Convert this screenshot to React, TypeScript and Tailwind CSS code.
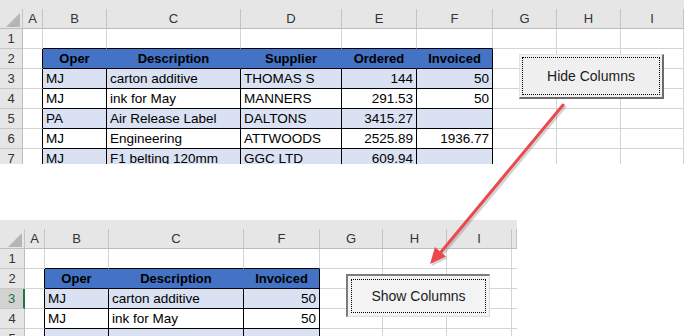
import React from 'react';

interface Col {
  letter: string;
  w: string;
}

interface SheetProps {
  hdrW: string;
  cols: Col[];
  tableCols: number[];
  numericCols: number[];
  rows: Record<number, string[]>;
  rowCount: number;
  heightClass: string;
  activeRow?: number;
}

const topCols: Col[] = [
  { letter: 'A', w: 'w-[20px]' },
  { letter: 'B', w: 'w-[64px]' },
  { letter: 'C', w: 'w-[134px]' },
  { letter: 'D', w: 'w-[101px]' },
  { letter: 'E', w: 'w-[75px]' },
  { letter: 'F', w: 'w-[76px]' },
  { letter: 'G', w: 'w-[64px]' },
  { letter: 'H', w: 'w-[64px]' },
  { letter: 'I', w: 'w-[63px]' },
];

const bottomCols: Col[] = [
  { letter: 'A', w: 'w-[20px]' },
  { letter: 'B', w: 'w-[64px]' },
  { letter: 'C', w: 'w-[135px]' },
  { letter: 'F', w: 'w-[76px]' },
  { letter: 'G', w: 'w-[63px]' },
  { letter: 'H', w: 'w-[64px]' },
  { letter: 'I', w: 'w-[65px]' },
  { letter: '', w: 'w-[5px]' },
];

const topRows: Record<number, string[]> = {
  2: ['Oper', 'Description', 'Supplier', 'Ordered', 'Invoiced'],
  3: ['MJ', 'carton additive', 'THOMAS S', '144', '50'],
  4: ['MJ', 'ink for May', 'MANNERS', '291.53', '50'],
  5: ['PA', 'Air Release Label', 'DALTONS', '3415.27', ''],
  6: ['MJ', 'Engineering', 'ATTWOODS', '2525.89', '1936.77'],
  7: ['MJ', 'F1 belting 120mm', 'GGC LTD', '609.94', ''],
};

const bottomRows: Record<number, string[]> = {
  2: ['Oper', 'Description', 'Invoiced'],
  3: ['MJ', 'carton additive', '50'],
  4: ['MJ', 'ink for May', '50'],
  5: ['', '', ''],
};

function Sheet({ hdrW, cols, tableCols, numericCols, rows, rowCount, heightClass, activeRow }: SheetProps) {
  const inTable = (c: number, r: number) => tableCols.includes(c) && r >= 2;

  return (
    <div className={`${heightClass} overflow-hidden flex flex-col`}>
      {/* column letters */}
      <div className="flex items-end h-[29px] shrink-0 bg-[#e6e6e6] border-b border-[#bdbdbd]">
        <div className={`${hdrW} h-[19px] relative border-r border-[#c4c4c4]`}>
          <svg className="absolute right-[2px] bottom-[1px]" width="14" height="14" viewBox="0 0 14 14">
            <polygon points="14,0 14,14 0,14" fill="#b5b5b5" />
          </svg>
        </div>
        {cols.map((c, i) => (
          <div
            key={i}
            className={`${c.w} h-[19px] border-r border-[#c4c4c4] flex items-center justify-center text-[13px] text-[#333]`}
          >
            {c.letter}
          </div>
        ))}
      </div>

      {Array.from({ length: rowCount }, (_, k) => k + 1).map((r) => {
        const data = rows[r];
        const active = r === activeRow;
        return (
          <div key={r} className="flex h-[20px] shrink-0">
            <div
              className={clsxRow(hdrW, active)}
            >
              {r}
            </div>
            {cols.map((c, i) => {
              const t = inTable(i, r);
              const header = r === 2 && t;
              const rightBlack = (t || inTable(i + 1, r)) && !(r === 2 && t && inTable(i + 1, r));
              const rightBlue = r === 2 && t && inTable(i + 1, r);
              const bottomBlack = t || inTable(i, r + 1);
              const value = t && data ? data[tableCols.indexOf(i)] : '';
              const numeric = numericCols.includes(i);
              const bg = header ? 'bg-[#4472c4]' : t && r % 2 === 1 ? 'bg-[#d9e1f2]' : 'bg-white';
              const align = header ? 'text-center font-bold text-[13px]' : numeric ? 'text-right text-[13.5px]' : 'text-left text-[13.5px]';
              return (
                <div
                  key={i}
                  className={`${c.w} h-full shrink-0 border-r border-b px-[3px] pt-[1px] leading-[18px] whitespace-nowrap overflow-hidden text-black ${bg} ${align} ${
                    rightBlue ? 'border-r-[#4472c4]' : rightBlack ? 'border-r-black' : 'border-r-[#d4d4d4]'
                  } ${bottomBlack ? 'border-b-black' : 'border-b-[#d4d4d4]'}`}
                >
                  {value}
                </div>
              );
            })}
          </div>
        );
      })}
    </div>
  );
}

function clsxRow(hdrW: string, active: boolean) {
  return active
    ? `${hdrW} h-full shrink-0 bg-[#d2d2d2] border-r-2 border-r-[#217346] border-b border-b-[#c8c8c8] flex items-center justify-center text-[13px] text-[#217346]`
    : `${hdrW} h-full shrink-0 bg-[#e6e6e6] border-r border-r-[#bdbdbd] border-b border-b-[#c8c8c8] flex items-center justify-center text-[13px] text-[#333]`;
}

export default function App() {
  return (
    <div className="relative w-[684px] h-[336px] bg-white overflow-hidden font-['Liberation_Sans',Arial,sans-serif]">
      <Sheet
        hdrW="w-[23px]"
        cols={topCols}
        tableCols={[1, 2, 3, 4, 5]}
        numericCols={[4, 5]}
        rows={topRows}
        rowCount={7}
        heightClass="h-[164px] w-[684px]"
      />
      <div className="h-[56px]" />
      <Sheet
        hdrW="w-[25px]"
        cols={bottomCols}
        tableCols={[1, 2, 3]}
        numericCols={[3]}
        rows={bottomRows}
        rowCount={5}
        heightClass="h-[116px] w-[517px]"
        activeRow={3}
      />

      {/* Hide Columns button */}
      <div className="absolute left-[519px] top-[54px] w-[145px] h-[45px] bg-[#f0f0f0] border-t border-l border-t-[#e2e2e2] border-l-[#e2e2e2] border-b-2 border-r-2 border-b-[#6b6b6b] border-r-[#6b6b6b] p-[2px]">
        <div className="h-full border border-dotted border-black flex items-center justify-center text-[14px] text-[#1b1b1b]">
          Hide Columns
        </div>
      </div>

      {/* Show Columns button (pressed) */}
      <div className="absolute left-[346px] top-[274px] w-[144px] h-[43px] bg-[#f3f3f3] border-t-2 border-l-2 border-t-[#7c7c7c] border-l-[#7c7c7c] border-b border-r border-b-[#dcdcdc] border-r-[#dcdcdc] p-[3px]">
        <div className="h-full border border-dotted border-black flex items-center justify-center text-[14px] text-[#1b1b1b]">
          Show Columns
        </div>
      </div>

      {/* arrow */}
      <svg className="absolute left-0 top-0 pointer-events-none" width="684" height="336" viewBox="0 0 684 336">
        <g opacity="0.25" transform="translate(1.5,2)">
          <line x1="563" y1="105" x2="441" y2="252" stroke="#555" strokeWidth="3.5" strokeLinecap="round" />
          <polygon points="430,264 446,256.5 435,247" fill="#555" />
        </g>
        <line x1="563" y1="105" x2="441" y2="252" stroke="#ea4a4f" strokeWidth="3" strokeLinecap="round" />
        <polygon points="430,264 446,256.5 435,247" fill="#ea4a4f" />
      </svg>
    </div>
  );
}
